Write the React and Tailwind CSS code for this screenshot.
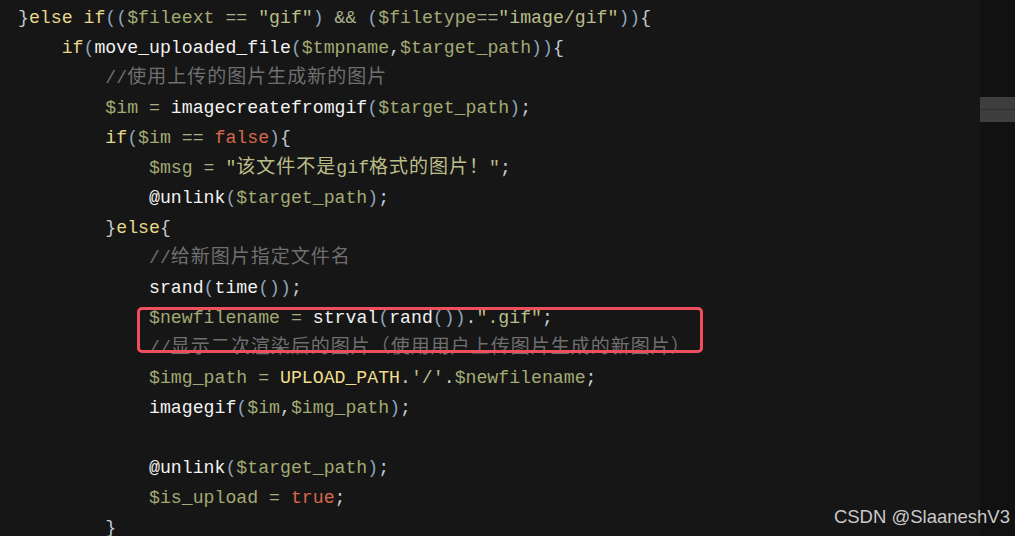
import React from 'react';

const colors = {
  kw: 'text-[#e8d88a]',
  br: 'text-[#c2cad3]',
  pa: 'text-[#8ea5bd]',
  va: 'text-[#a3aa74]',
  st: 'text-[#bcbe8a]',
  op: 'text-[#a9ae88]',
  fn: 'text-[#f2f2f2]',
  cm: 'text-[#6f6f6f]',
  bo: 'text-[#d8684a]',
  co: 'text-[#f0dd8c]',
  pu: 'text-[#c8d0d8]',
};

// CJK glyphs take ~20px each in the reference
function Cjk({ children }) {
  return <span className="text-[19px] tracking-[1px]">{children}</span>;
}

const lines = [
  [0, [['br', '}'], ['kw', 'else if'], ['pa', '(('], ['va', '$fileext'], ['op', ' == '], ['st', '"gif"'], ['pa', ')'], ['op', ' && '], ['pa', '('], ['va', '$filetype'], ['op', '=='], ['st', '"image/gif"'], ['pa', '))'], ['br', '{']]],
  [1, [['kw', 'if'], ['pa', '('], ['fn', 'move_uploaded_file'], ['pa', '('], ['va', '$tmpname'], ['pu', ','], ['va', '$target_path'], ['pa', '))'], ['br', '{']]],
  [2, [['cm', '//'], ['cmc', '使用上传的图片生成新的图片']]],
  [2, [['va', '$im'], ['op', ' = '], ['fn', 'imagecreatefromgif'], ['pa', '('], ['va', '$target_path'], ['pa', ')'], ['pu', ';']]],
  [2, [['kw', 'if'], ['pa', '('], ['va', '$im'], ['op', ' == '], ['bo', 'false'], ['pa', ')'], ['br', '{']]],
  [3, [['va', '$msg'], ['op', ' = '], ['st', '"'], ['stc', '该文件不是'], ['st', 'gif'], ['stc', '格式的图片！'], ['st', '"'], ['pu', ';']]],
  [3, [['fn', '@unlink'], ['pa', '('], ['va', '$target_path'], ['pa', ')'], ['pu', ';']]],
  [2, [['br', '}'], ['kw', 'else'], ['br', '{']]],
  [3, [['cm', '//'], ['cmc', '给新图片指定文件名']]],
  [3, [['fn', 'srand'], ['pa', '('], ['fn', 'time'], ['pa', '())'], ['pu', ';']]],
  [3, [['va', '$newfilename'], ['op', ' = '], ['fn', 'strval'], ['pa', '('], ['fn', 'rand'], ['pa', '())'], ['pu', '.'], ['st', '".gif"'], ['pu', ';']]],
  [3, [['cm', '//'], ['cmc', '显示二次渲染后的图片（使用用户上传图片生成的新图片）']]],
  [3, [['va', '$img_path'], ['op', ' = '], ['co', 'UPLOAD_PATH'], ['pu', '.'], ['st', "'/'"], ['pu', '.'], ['va', '$newfilename'], ['pu', ';']]],
  [3, [['fn', 'imagegif'], ['pa', '('], ['va', '$im'], ['pu', ','], ['va', '$img_path'], ['pa', ')'], ['pu', ';']]],
  [0, []],
  [3, [['fn', '@unlink'], ['pa', '('], ['va', '$target_path'], ['pa', ')'], ['pu', ';']]],
  [3, [['va', '$is_upload'], ['op', ' = '], ['bo', 'true'], ['pu', ';']]],
  [2, [['br', '}']]],
];

function Token({ type, text }) {
  if (type === 'cmc') return <span className={colors.cm}><Cjk>{text}</Cjk></span>;
  if (type === 'stc') return <span className={colors.st}><Cjk>{text}</Cjk></span>;
  return <span className={colors[type]}>{text}</span>;
}

export default function App() {
  return (
    <div className="relative w-[1015px] h-[536px] overflow-hidden bg-[#161616] flex">
      <div className="relative flex-1 pt-[3px] pl-[18px] font-['Liberation_Mono','Noto_Sans_CJK_SC',monospace] text-[18.2px] whitespace-pre">
        {lines.map(([indent, tokens], i) => (
          <div key={i} className="h-[30px] leading-[30px]">
            {'    '.repeat(indent)}
            {tokens.map(([type, text], j) => (
              <Token key={j} type={type} text={text} />
            ))}
          </div>
        ))}

        {/* highlight box */}
        <div className="absolute left-[137px] top-[307px] w-[566px] h-[46px] border-[3px] border-[#ef4e5d] rounded-[5px]"></div>
      </div>

      {/* scrollbar / overview ruler */}
      <div className="w-[35px] bg-[#111111] pt-[97px]">
        <div className="h-[12px] bg-[#3e3e3e]"></div>
        <div className="h-[1px] bg-[#303030]"></div>
        <div className="h-[12px] bg-[#3e3e3e]"></div>
      </div>

      {/* watermark */}
      <div className="absolute right-[5px] top-[505px] font-['Liberation_Sans',sans-serif] text-[18.5px] text-[#c9c9c9] leading-[24px]">
        CSDN @SlaaneshV3
      </div>
    </div>
  );
}
